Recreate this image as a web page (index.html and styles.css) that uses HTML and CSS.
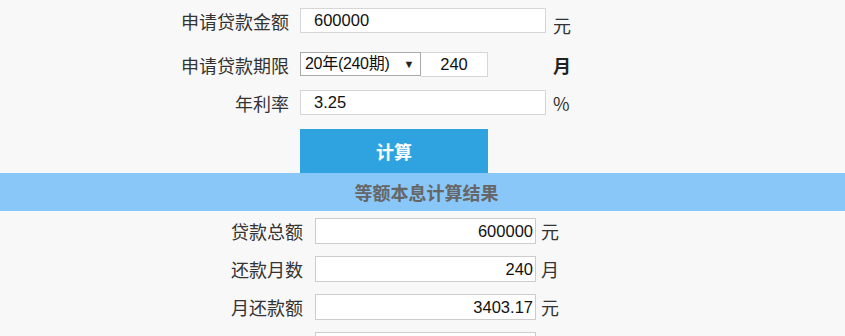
FILE: index.html
```html
<!DOCTYPE html>
<html lang="zh-CN">
<head>
    <meta charset="UTF-8">
    <title>等额本息计算</title>
    <link rel="stylesheet" href="styles.css">
</head>
<body>
    <div class="calc-form">
        <div class="form-row">
            <label class="form-label">申请贷款金额</label>
            <input class="form-input" type="text" value="600000">
            <span class="form-unit unit-low">元</span>
        </div>
        <div class="form-row">
            <label class="form-label">申请贷款期限</label>
            <div class="term-box">
                <div class="fake-select">20年(240期)<span class="select-arrow">▼</span></div>
                <input class="term-input" type="text" value="240">
            </div>
            <span class="form-unit unit-bold">月</span>
        </div>
        <div class="form-row">
            <label class="form-label">年利率</label>
            <input class="form-input" type="text" value="3.25">
            <span class="form-unit">%</span>
        </div>
        <div class="form-row">
            <span class="form-label"></span>
            <button class="calc-btn">计算</button>
        </div>
    </div>

    <div class="result-title">等额本息计算结果</div>

    <div class="result-list">
        <div class="result-row">
            <label class="result-label">贷款总额</label>
            <input class="result-input" type="text" value="600000" readonly>
            <span class="result-unit">元</span>
        </div>
        <div class="result-row">
            <label class="result-label">还款月数</label>
            <input class="result-input" type="text" value="240" readonly>
            <span class="result-unit">月</span>
        </div>
        <div class="result-row">
            <label class="result-label">月还款额</label>
            <input class="result-input" type="text" value="3403.17" readonly>
            <span class="result-unit">元</span>
        </div>
        <div class="result-row">
            <label class="result-label">总支付利息</label>
            <input class="result-input" type="text" value="216761.48" readonly>
            <span class="result-unit">元</span>
        </div>
    </div>
</body>
</html>
```

FILE: styles.css
```css
body {
    margin: 0;
    background: #f8f8f8;
    font-family: "Liberation Sans", "Noto Sans CJK SC", sans-serif;
    color: #333;
    overflow: hidden;
}

.calc-form {
    padding-top: 8px;
}

.form-row {
    display: grid;
    grid-template-columns: 289px 246px auto;
    column-gap: 11px;
    align-items: center;
    margin-bottom: 19px;
}

.form-row:nth-child(2) {
    margin-bottom: 13px;
}

.form-row:nth-child(3) {
    margin-bottom: 14px;
}

.form-row:last-child {
    margin-bottom: 0;
}

.form-label {
    text-align: right;
    font-family: "Noto Sans CJK SC", sans-serif;
    font-size: 18px;
    line-height: 24px;
    color: #333;
}

.form-input {
    box-sizing: border-box;
    width: 246px;
    height: 25px;
    margin: 0;
    padding: 0 13px;
    border: 1px solid #d6d6d6;
    background: #fff;
    font-family: "Liberation Sans", sans-serif;
    font-size: 16.5px;
    color: #111;
    outline: none;
}

.form-unit {
    margin-left: -4px;
    font-family: "Noto Sans CJK SC", sans-serif;
    font-size: 18px;
    line-height: 24px;
    color: #333;
}

.unit-low {
    align-self: end;
    margin-bottom: -4px;
}

.unit-bold {
    font-weight: bold;
    color: #222;
}

.term-box {
    display: flex;
    width: 188px;
}

.fake-select {
    box-sizing: border-box;
    width: 121px;
    height: 24px;
    padding-left: 4px;
    border: 1px solid #aaa;
    background: #fff;
    font-family: "Liberation Sans", "Noto Sans CJK SC", sans-serif;
    font-size: 16px;
    line-height: 22px;
    color: #111;
    position: relative;
    white-space: nowrap;
    letter-spacing: -0.3px;
}

.select-arrow {
    position: absolute;
    right: 6px;
    top: 0;
    font-size: 11px;
    color: #222;
}

.term-input {
    box-sizing: border-box;
    width: 67px;
    height: 25px;
    margin: 0;
    padding: 0;
    border: 1px solid #d6d6d6;
    border-left: none;
    background: #fff;
    font-family: "Liberation Sans", sans-serif;
    font-size: 16.5px;
    text-align: center;
    color: #111;
    outline: none;
}

.calc-btn {
    width: 188px;
    height: 44px;
    border: none;
    background: #2fa3e0;
    color: #fff;
    font-family: "Noto Sans CJK SC", sans-serif;
    font-size: 18px;
    font-weight: bold;
    cursor: pointer;
}

.result-title {
    height: 38px;
    line-height: 38px;
    background: #89c7f9;
    text-align: center;
    font-family: "Noto Sans CJK SC", sans-serif;
    font-size: 18px;
    font-weight: bold;
    color: #666;
    padding-left: 8px;
}

.result-list {
    padding-top: 7px;
}

.result-row {
    display: flex;
    align-items: center;
    margin-bottom: 12px;
}

.result-label {
    box-sizing: border-box;
    width: 315px;
    padding-right: 12px;
    text-align: right;
    font-family: "Noto Sans CJK SC", sans-serif;
    font-size: 18px;
    line-height: 26px;
    color: #333;
}

.result-input {
    box-sizing: border-box;
    width: 221px;
    height: 26px;
    margin: 0;
    padding: 0 2px;
    border: 1px solid #ccc;
    background: #fff;
    font-family: "Liberation Sans", sans-serif;
    font-size: 16.5px;
    text-align: right;
    color: #111;
    outline: none;
}

.result-unit {
    margin-left: 5px;
    font-family: "Noto Sans CJK SC", sans-serif;
    font-size: 18px;
    line-height: 26px;
    color: #333;
}
```
